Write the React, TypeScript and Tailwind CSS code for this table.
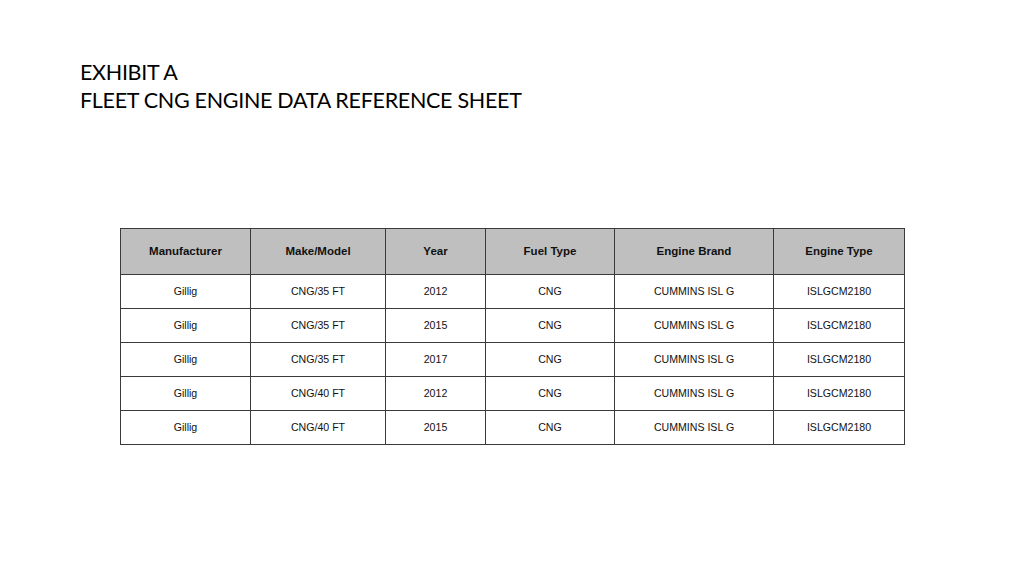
const headers = ['Manufacturer', 'Make/Model', 'Year', 'Fuel Type', 'Engine Brand', 'Engine Type'];
const widths = ['w-[130px]', 'w-[135px]', 'w-[100px]', 'w-[129px]', 'w-[159px]', 'w-[131px]'];

const rows = [
  ['Gillig', 'CNG/35 FT', '2012', 'CNG', 'CUMMINS ISL G', 'ISLGCM2180'],
  ['Gillig', 'CNG/35 FT', '2015', 'CNG', 'CUMMINS ISL G', 'ISLGCM2180'],
  ['Gillig', 'CNG/35 FT', '2017', 'CNG', 'CUMMINS ISL G', 'ISLGCM2180'],
  ['Gillig', 'CNG/40 FT', '2012', 'CNG', 'CUMMINS ISL G', 'ISLGCM2180'],
  ['Gillig', 'CNG/40 FT', '2015', 'CNG', 'CUMMINS ISL G', 'ISLGCM2180'],
];

const App = () => {
  return (
    <div className="w-[1024px] h-[576px] bg-white overflow-hidden">
      {/* Title */}
      <div className="pl-[80px] pt-[58px] font-['Lato','Open_Sans',sans-serif] text-[21.5px] leading-[28px] text-black tracking-[-0.3px]">
        <div>EXHIBIT A</div>
        <div>FLEET CNG ENGINE DATA REFERENCE SHEET</div>
      </div>

      {/* Table */}
      <div className="pl-[120px] pt-[114px]">
        <table className="border-collapse table-fixed font-['Liberation_Sans',Arial,sans-serif] text-[10.6px] text-[#111111]">
          <thead>
            <tr className="h-[46px] bg-[#bfbfbf]">
              {headers.map((h, i) => (
                <th key={h} className={`${widths[i]} border-[1.5px] border-[#3a3a3a] font-bold text-[11.5px] text-center align-middle p-0`}>
                  {h}
                </th>
              ))}
            </tr>
          </thead>
          <tbody>
            {rows.map((r, ri) => (
              <tr key={ri} className="h-[34px]">
                {r.map((c, ci) => (
                  <td key={ci} className="border-[1.5px] border-[#3a3a3a] text-center align-middle p-0">
                    {c}
                  </td>
                ))}
              </tr>
            ))}
          </tbody>
        </table>
      </div>
    </div>
  );
};

export default App;
